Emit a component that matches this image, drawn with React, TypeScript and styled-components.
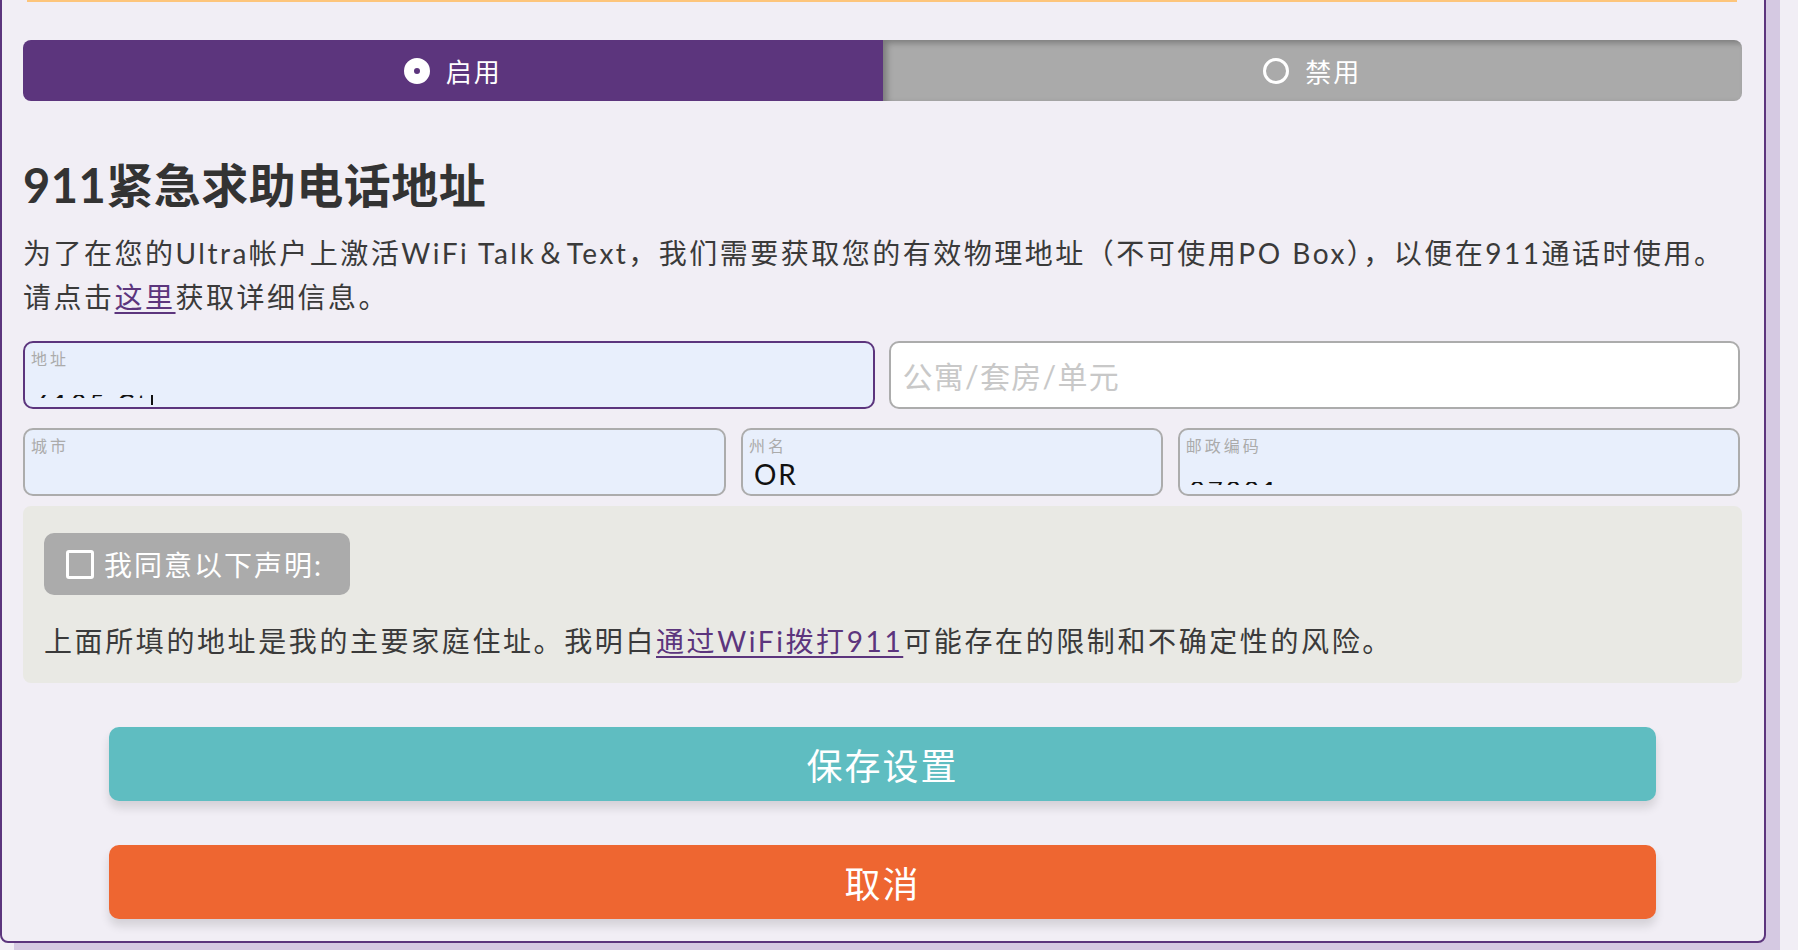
import React from "react";
import styled, { createGlobalStyle } from "styled-components";

const GlobalStyle = createGlobalStyle`
  html, body {
    margin: 0;
    padding: 0;
    background: #f1eef5;
  }
  body {
    font-family: Lato, "Noto Sans CJK SC", sans-serif;
    color: #333333;
  }
`;

const fields = [
  { label: "城市", value: "", span: "city" },
  { label: "州名", value: "OR", span: "state" },
  { label: "邮政编码", value: "97201", span: "zip", clipped: true },
];

const App = () => {
  return (
    <Page>
      <GlobalStyle />
      <Card>
        <NoticeEdge />

        <Toggle>
          <ToggleOption $active>
            <RadioDot $active />
            <span>启用</span>
          </ToggleOption>
          <ToggleOption>
            <RadioDot />
            <span>禁用</span>
          </ToggleOption>
        </Toggle>

        <Heading>911紧急求助电话地址</Heading>
        <Intro>
          为了在您的Ultra帐户上激活WiFi Talk＆Text，我们需要获取您的有效物理地址（不可使用PO Box），以便在911通话时使用。
          <br />
          请点击<Link href="#">这里</Link>获取详细信息。
        </Intro>

        <RowTwo>
          <Field $focused>
            <FieldLabel>地址</FieldLabel>
            <ValueRow>
              <ValueClip>
                <span>6125 Ct</span>
              </ValueClip>
              <Caret />
            </ValueRow>
          </Field>
          <Field $plain>
            <Placeholder>公寓/套房/单元</Placeholder>
          </Field>
        </RowTwo>

        <RowThree>
          {fields.map((f) => (
            <Field key={f.span}>
              <FieldLabel>{f.label}</FieldLabel>
              {f.clipped ? (
                <ValueRow>
                  <ValueClip>
                    <span>{f.value}</span>
                  </ValueClip>
                </ValueRow>
              ) : (
                <FieldValue>{f.value}</FieldValue>
              )}
            </Field>
          ))}
        </RowThree>

        <ConsentBox>
          <AgreeButton type="button">
            <CheckSquare />
            <span>我同意以下声明:</span>
          </AgreeButton>
          <Statement>
            上面所填的地址是我的主要家庭住址。我明白
            <Link href="#">通过WiFi拨打911</Link>
            可能存在的限制和不确定性的风险。
          </Statement>
        </ConsentBox>

        <Actions>
          <ActionButton type="button" $color="#5fbdc1">
            保存设置
          </ActionButton>
          <ActionButton type="button" $color="#ee6631">
            取消
          </ActionButton>
        </Actions>
      </Card>
    </Page>
  );
};

const Page = styled.div`
  width: 1798px;
  height: 950px;
  overflow: hidden;
  background: #f1eef5;
`;

const Card = styled.div`
  box-sizing: border-box;
  width: 1766px;
  margin-top: -32px;
  padding: 0 22px 22px 21px;
  background: #f1eef5;
  border: 2px solid #5c357d;
  border-radius: 8px;
  box-shadow: 14px 14px 0 #d5c9e2;
  display: flex;
  flex-direction: column;
`;

const NoticeEdge = styled.div`
  box-sizing: border-box;
  height: 32px;
  margin: 0 5px 0 4px;
  border-bottom: 2px solid #fdc57b;
`;

const Toggle = styled.div`
  margin-top: 38px;
  height: 61px;
  display: grid;
  grid-template-columns: 1fr 1fr;
  border-radius: 8px;
  overflow: hidden;
`;

const ToggleOption = styled.div<{ $active?: boolean }>`
  display: flex;
  align-items: center;
  justify-content: center;
  gap: 16px;
  background: ${(p) => (p.$active ? "#5c357d" : "#aaaaaa")};
  box-shadow: ${(p) =>
    p.$active ? "none" : "inset 4px 3px 6px rgba(0, 0, 0, 0.28)"};
  color: #ffffff;
  font-size: 26px;
  letter-spacing: 2px;
`;

const RadioDot = styled.span<{ $active?: boolean }>`
  box-sizing: border-box;
  width: 26px;
  height: 26px;
  border-radius: 50%;
  border: ${(p) => (p.$active ? "10px solid #ffffff" : "3px solid #ffffff")};
  background: ${(p) => (p.$active ? "#5c357d" : "transparent")};
`;

const Heading = styled.h1`
  margin: 54px 0 0;
  font-size: 47px;
  line-height: 60px;
  font-weight: 700;
  letter-spacing: 0.5px;
  color: #333333;
`;

const Intro = styled.p`
  margin: 16px 0 0;
  font-size: 28px;
  line-height: 44px;
  letter-spacing: 2.5px;
  color: #3a3a3a;
`;

const Link = styled.a`
  color: #5c357d;
  text-decoration: underline;
  text-decoration-thickness: 2px;
  text-underline-offset: 4px;
`;

const RowTwo = styled.div`
  margin: 22px 2px 0 0;
  display: grid;
  grid-template-columns: 1fr 1fr;
  gap: 14px;
`;

const RowThree = styled.div`
  margin: 19px 2px 0 0;
  display: grid;
  grid-template-columns: 5fr 3fr 4fr;
  gap: 15px;
`;

const Field = styled.div<{ $focused?: boolean; $plain?: boolean }>`
  box-sizing: border-box;
  height: 68px;
  padding: 6px 6px;
  border: 2px solid ${(p) => (p.$focused ? "#5c357d" : "#acacac")};
  border-radius: 10px;
  background: ${(p) => (p.$plain ? "#ffffff" : "#e8effc")};
  display: flex;
  flex-direction: column;
  justify-content: ${(p) => (p.$plain ? "center" : "space-between")};
  overflow: hidden;
`;

const FieldLabel = styled.div`
  font-size: 16px;
  line-height: 20px;
  letter-spacing: 3px;
  color: #ababab;
`;

const FieldValue = styled.div`
  padding-left: 5px;
  font-size: 28px;
  line-height: 28px;
  color: #111111;
  letter-spacing: 2px;
`;

const ValueRow = styled.div`
  height: 6px;
  display: flex;
  align-items: flex-start;
  padding-left: 4px;
`;

const ValueClip = styled.div`
  height: 3px;
  overflow: hidden;
  font-size: 26px;
  color: #111111;
  letter-spacing: 3px;

  span {
    display: block;
    line-height: 26px;
    margin-top: -4px;
  }
`;

const Caret = styled.span`
  width: 2px;
  height: 10px;
  margin-left: 2px;
  background: #111111;
  flex-shrink: 0;
`;

const Placeholder = styled.div`
  padding-left: 6px;
  font-size: 30px;
  letter-spacing: 1.3px;
  color: #c8c8c8;
`;

const ConsentBox = styled.div`
  margin-top: 10px;
  padding: 27px 21px 20px;
  background: #e9e9e4;
  border-radius: 8px;
  display: flex;
  flex-direction: column;
  align-items: flex-start;
`;

const AgreeButton = styled.button`
  height: 62px;
  padding: 0 27px 0 22px;
  border: none;
  border-radius: 10px;
  background: #ababab;
  color: #ffffff;
  font-family: Lato, "Noto Sans CJK SC", sans-serif;
  font-size: 28px;
  letter-spacing: 2px;
  display: flex;
  align-items: center;
  gap: 10px;
`;

const CheckSquare = styled.span`
  box-sizing: border-box;
  width: 28px;
  height: 29px;
  border: 3px solid #ffffff;
  border-radius: 3px;
`;

const Statement = styled.p`
  margin: 24px 0 0;
  font-size: 28px;
  line-height: 44px;
  letter-spacing: 2.6px;
  color: #3a3a3a;
`;

const Actions = styled.div`
  margin-top: 44px;
  display: flex;
  flex-direction: column;
  align-items: center;
  gap: 44px;
`;

const ActionButton = styled.button<{ $color: string }>`
  width: 90%;
  height: 74px;
  border: none;
  border-radius: 10px;
  background: ${(p) => p.$color};
  color: #ffffff;
  font-family: Lato, "Noto Sans CJK SC", sans-serif;
  font-size: 36px;
  letter-spacing: 2px;
  box-shadow: 0 7px 10px rgba(0, 0, 0, 0.12);
`;

export default App;
